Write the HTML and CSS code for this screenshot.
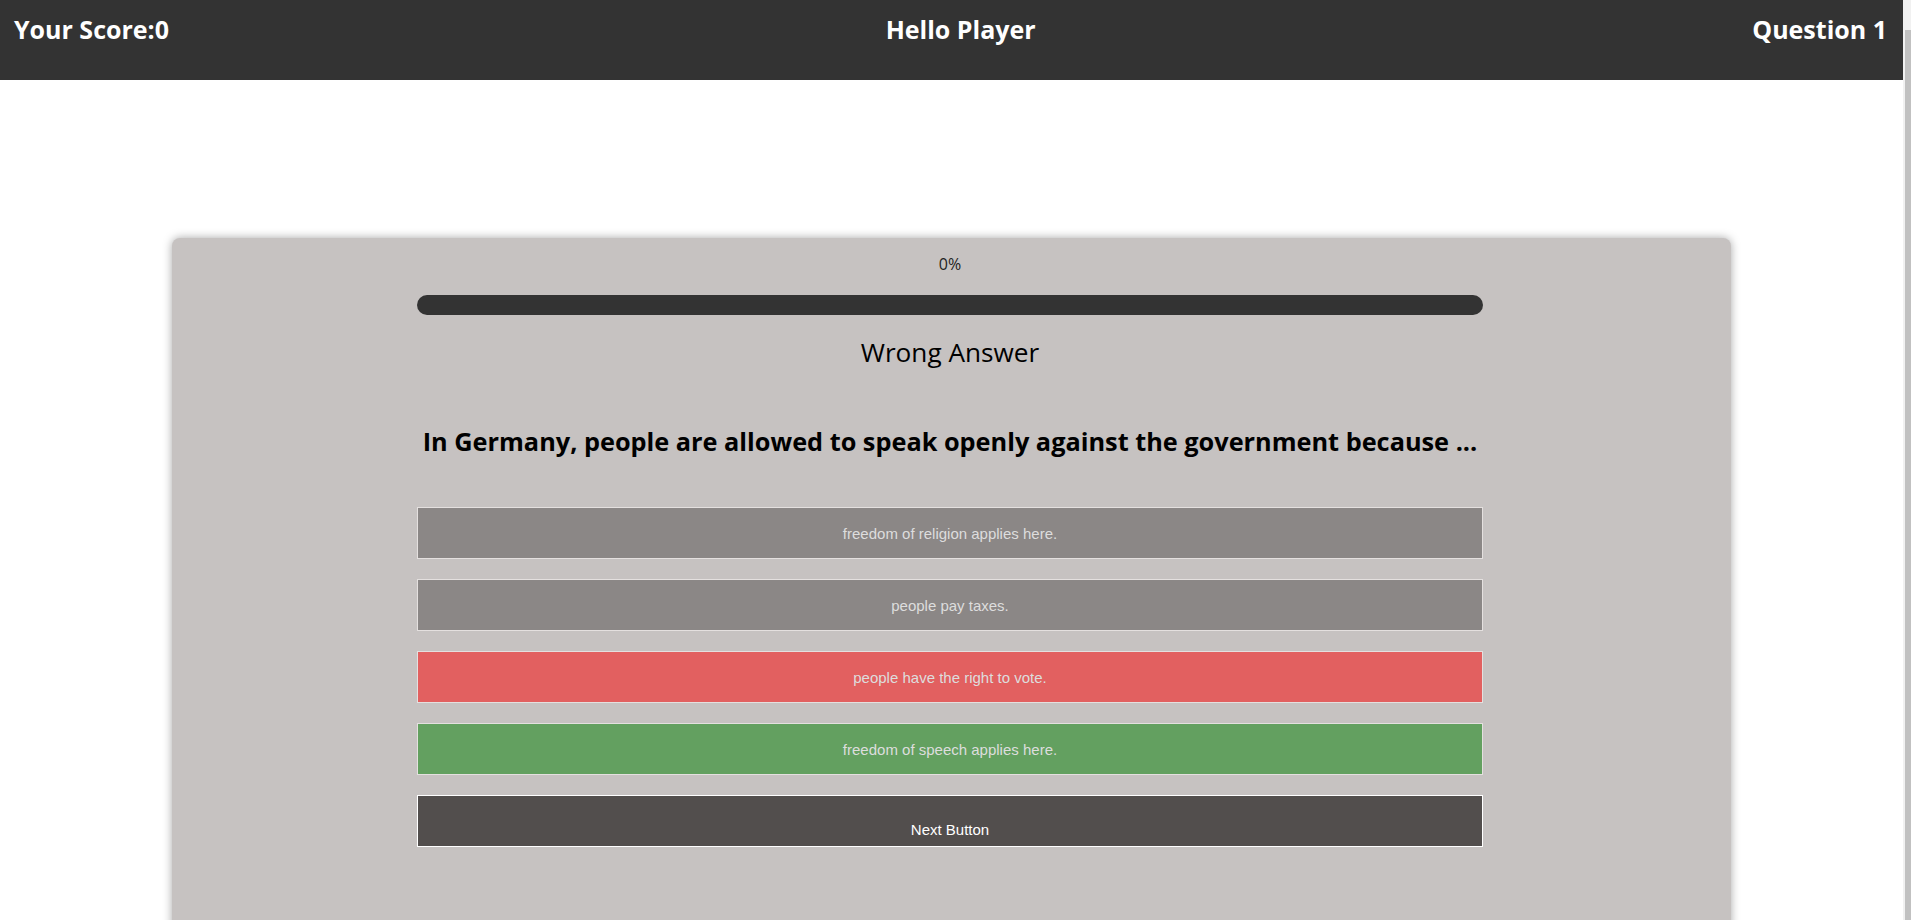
FILE: index.html
```html
<!DOCTYPE html>
<html lang="en">
<head>
<meta charset="utf-8">
<title>Quiz</title>
<link rel="stylesheet" href="styles.css">
</head>
<body>
<div class="page">
  <header class="topbar">
    <h2 class="topbar-item">Your Score:0</h2>
    <h2 class="topbar-item">Hello Player</h2>
    <h2 class="topbar-item">Question 1</h2>
  </header>
  <main class="card">
    <div class="inner">
      <p class="percent">0%</p>
      <div class="progress"></div>
      <p class="verdict">Wrong Answer</p>
      <h3 class="question">In Germany, people are allowed to speak openly against the government because ...</h3>
      <div class="options">
        <button class="option option-neutral">freedom of religion applies here.</button>
        <button class="option option-neutral">people pay taxes.</button>
        <button class="option option-wrong">people have the right to vote.</button>
        <button class="option option-right">freedom of speech applies here.</button>
        <button class="option next">Next Button</button>
      </div>
    </div>
  </main>
</div>
<div class="scrollbar"><div class="scrollbar-thumb"></div></div>
</body>
</html>
```
FILE: styles.css
```css
html, body {
  margin: 0;
  padding: 0;
  background: #fff;
}
body {
  font-family: "Open Sans", "DejaVu Sans", sans-serif;
  color: #000;
}
.page {
  margin-right: 8px;
}
.scrollbar {
  position: fixed;
  top: 0;
  right: 0;
  bottom: 0;
  width: 8px;
  background: #f1f1f1;
}
.scrollbar-thumb {
  position: absolute;
  top: 30px;
  left: 2px;
  right: 0;
  bottom: 0;
  background: #c1c1c1;
}
.topbar {
  box-sizing: border-box;
  height: 80px;
  background: #333;
  display: flex;
  justify-content: space-between;
  align-items: flex-start;
  padding: 12px 16px 0 14px;
}
.topbar-item {
  margin: 0;
  color: #fff;
  font-size: 25px;
  font-weight: 700;
  line-height: 34px;
}
.card {
  display: block;
  box-sizing: border-box;
  width: 1559px;
  margin: 158px auto 0;
  background: #c6c2c1;
  border-radius: 8px;
  box-shadow: 0 0 10px rgba(0, 0, 0, 0.35);
  padding: 15px 3px 110px 0;
}
.inner {
  width: 1066px;
  margin: 0 auto;
  display: flex;
  flex-direction: column;
  align-items: center;
}
.percent {
  margin: 0;
  font-size: 16px;
  line-height: 22px;
  color: #222;
}
.progress {
  margin-top: 20px;
  width: 100%;
  height: 20px;
  border-radius: 10px;
  background: #333;
}
.verdict {
  margin: 20px 0 0;
  font-size: 26.2px;
  line-height: 35px;
  font-weight: 400;
  color: #000;
}
.question {
  margin: 54px 0 0;
  font-size: 25.3px;
  line-height: 34px;
  font-weight: 700;
  color: #000;
}
.options {
  margin-top: 49px;
  width: 100%;
  display: flex;
  flex-direction: column;
  gap: 20px;
}
.option {
  box-sizing: border-box;
  width: 100%;
  height: 52px;
  margin: 0;
  border: 1px solid #e4e0df;
  font-family: "Liberation Sans", Arial, sans-serif;
  font-size: 15px;
  color: #ddd;
  padding: 0;
  cursor: pointer;
}
.option-neutral {
  background: #8b8786;
}
.option-wrong {
  background: #e26060;
}
.option-right {
  background: #63a060;
}
.next {
  background: #524e4d;
  color: #fff;
  border-color: #fff;
  padding: 25px 0 8px;
  display: flex;
  justify-content: center;
  align-items: flex-start;
  line-height: 17px;
}
```
